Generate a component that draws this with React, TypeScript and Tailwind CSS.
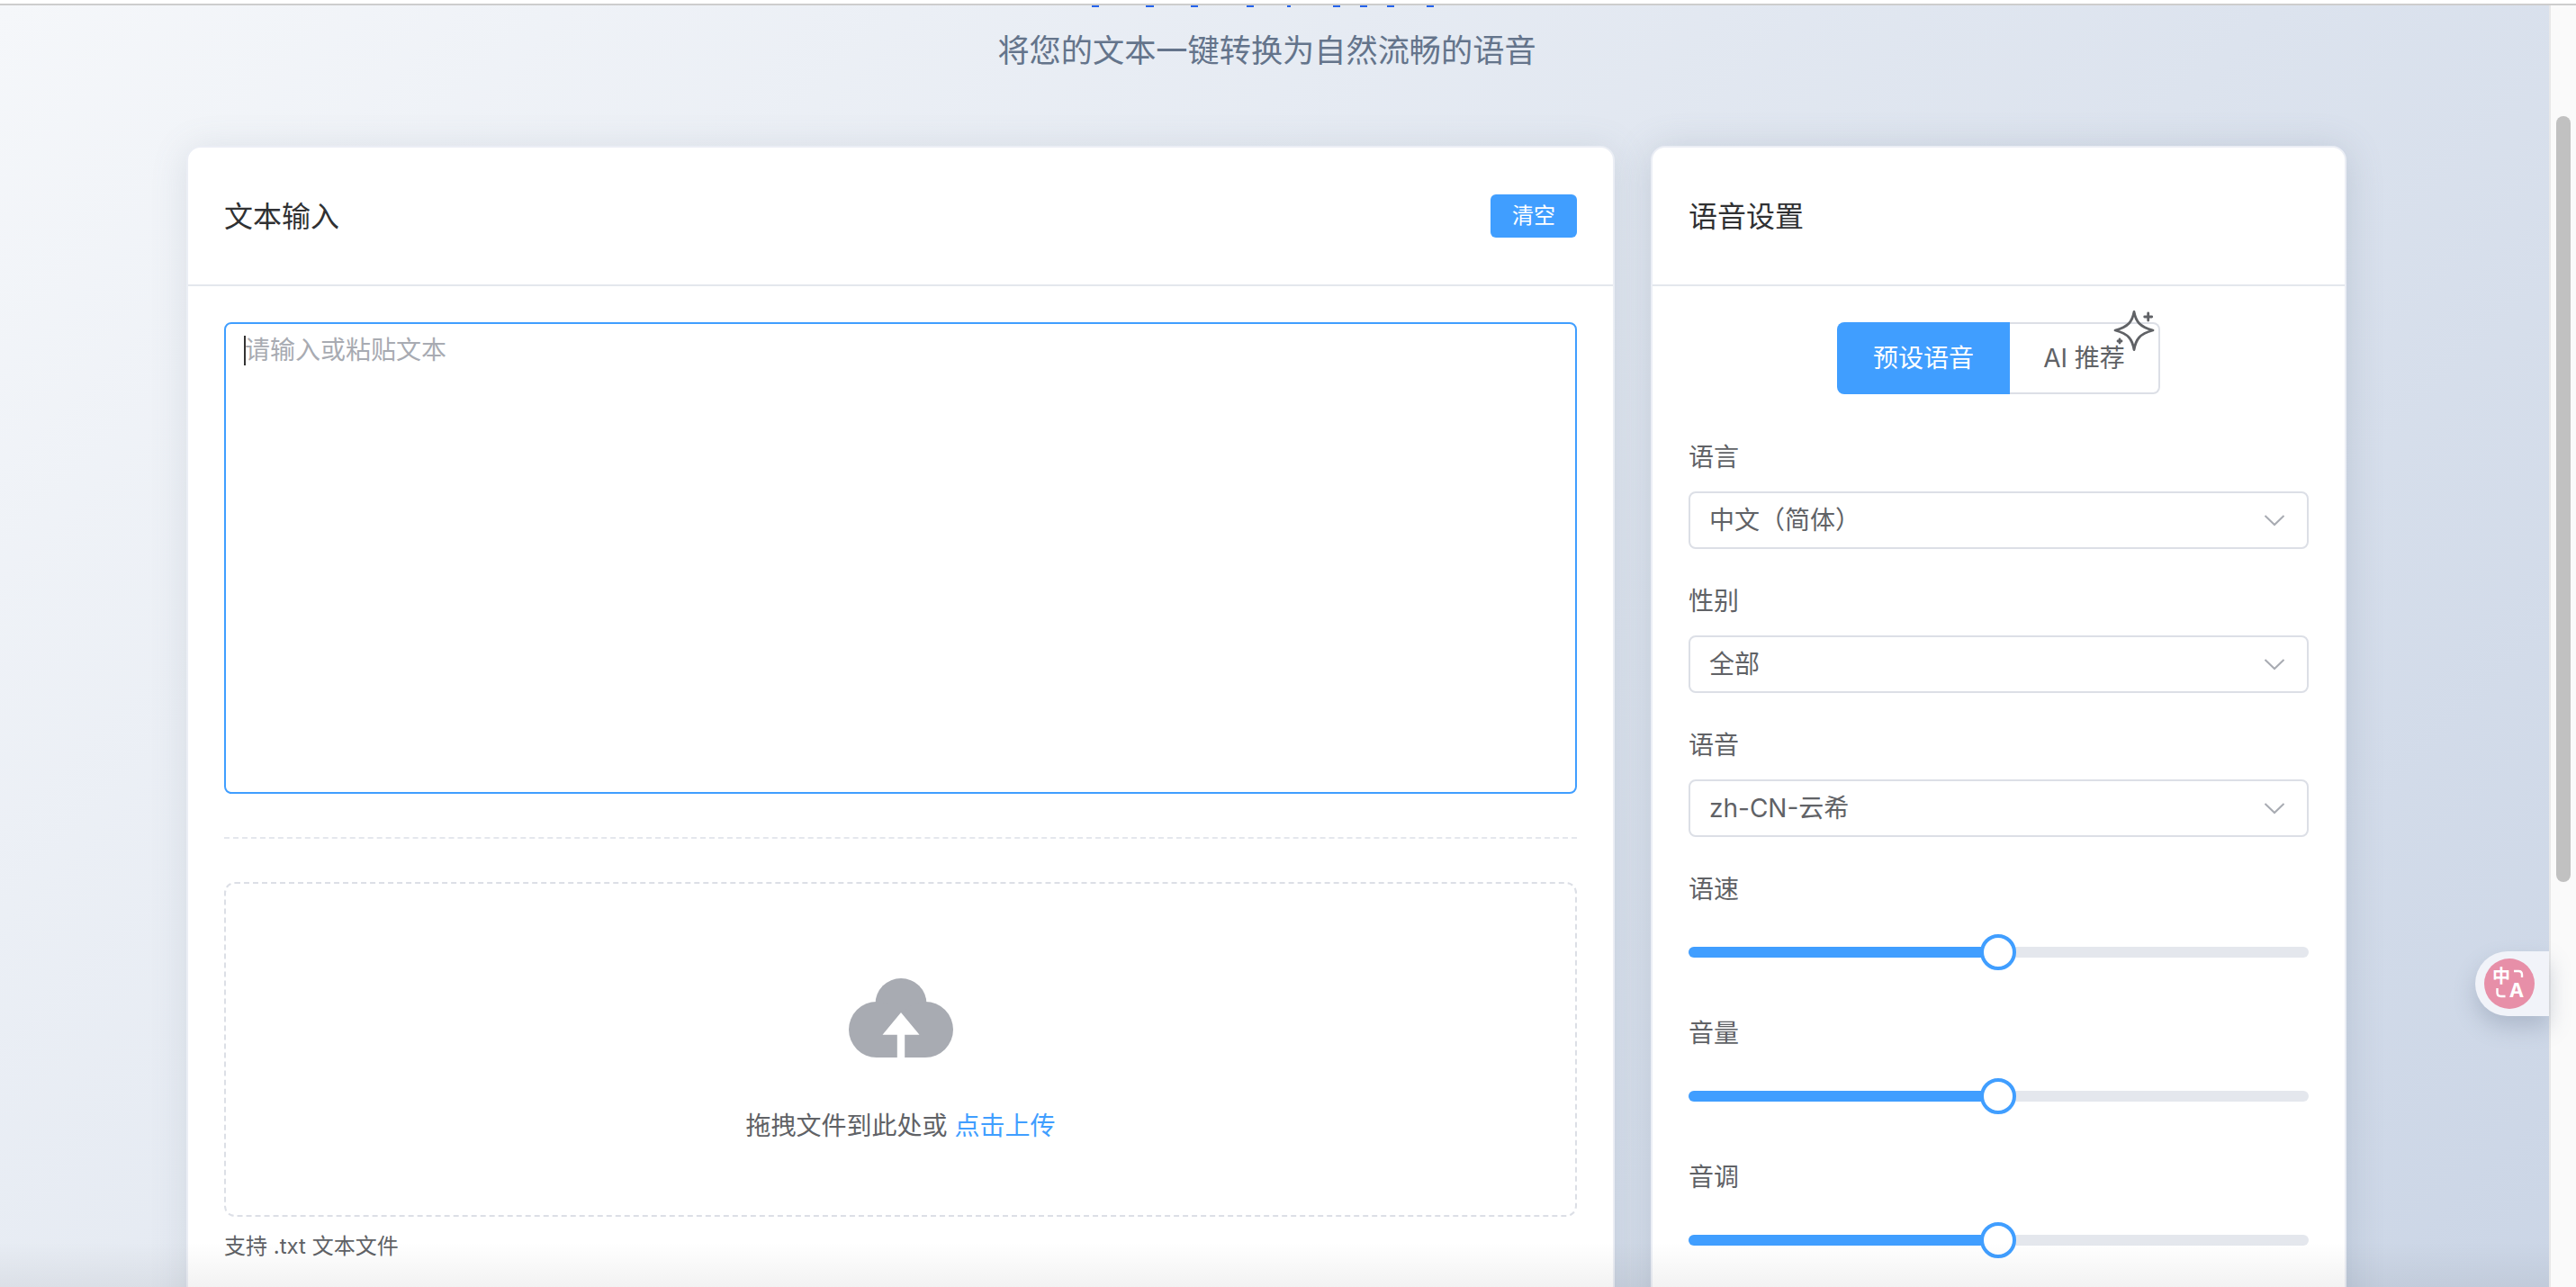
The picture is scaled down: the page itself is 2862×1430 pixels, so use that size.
import type { ReactNode } from 'react'

const TITLE_MARKS = [
  [1213, 8],
  [1273, 9],
  [1323, 8],
  [1385, 8],
  [1430, 4],
  [1481, 8],
  [1511, 8],
  [1541, 8],
  [1585, 8],
]

function Card({ className, children }: { className: string; children: ReactNode }) {
  return (
    <div className={`shrink-0 rounded-2xl border-2 border-[#ebeef5] bg-white ${className}`}>
      {children}
    </div>
  )
}

function CardHeader({ title, children }: { title: string; children?: ReactNode }) {
  return (
    <div className="flex h-[154px] items-center justify-between border-b-2 border-[#e4e7ed] px-10 text-[32px] text-[#303133]">
      <span className="pt-0.5">{title}</span>
      {children}
    </div>
  )
}

function Field({ label, children }: { label: string; children: ReactNode }) {
  return (
    <div className="mb-[37px]">
      <div className="mb-[19px] flex h-10 items-center pt-0.5 text-[28px] text-[#606266]">{label}</div>
      {children}
    </div>
  )
}

function SelectBox({ value }: { value: string }) {
  return (
    <div className="flex h-16 items-center justify-between rounded-lg border-2 border-[#dcdfe6] bg-white pl-[21px] pr-[24px] text-[28px] text-[#606266]">
      <span>{value}</span>
      <svg width="24" height="14" viewBox="0 0 24 14" fill="none" stroke="#a8abb2" strokeWidth="2">
        <path d="M1.5 2 12 12 22.5 2" />
      </svg>
    </div>
  )
}

function SliderBar() {
  return (
    <div className="relative flex h-16 items-center">
      <div className="h-3 w-full overflow-hidden rounded-md bg-[#e4e7ed]">
        <div className="h-full w-1/2 bg-[#409eff]" />
      </div>
      <div className="absolute left-[344px] top-3 h-10 w-10 -translate-x-1/2 rounded-full border-4 border-[#409eff] bg-white" />
    </div>
  )
}

function SparkIcon() {
  return (
    <svg
      className="absolute left-[305px] top-[-14px]"
      width="50"
      height="47"
      viewBox="0 0 50 47"
      fill="none"
      stroke="#606266"
      strokeWidth="2.8"
      strokeLinejoin="round"
      strokeLinecap="round"
    >
      <path d="M25 2.500C27 13 31 19 46 23C31 27 27 33 25 44.500C23 33 19 27 4 23C19 19 23 13 25 2.500Z" />
      <path d="M40.700 4V12M36.700 8H44.700" />
      <path d="M9 33V37M7 35H11" />
    </svg>
  )
}

function TranslateBadge() {
  return (
    <div className="absolute right-0 top-[1051px] flex h-[72px] w-[82px] items-center rounded-l-[36px] bg-[#f1f3f9] pl-[10px] shadow-[0_12px_24px_rgba(90,105,130,0.28)]">
      <svg width="56" height="56" viewBox="0 0 56 56">
        <circle cx="28" cy="28" r="28" fill="#e78fa8" />
        <text x="19" y="27" textAnchor="middle" fontSize="20" fontWeight="700" fill="#fff">中</text>
        <text x="36" y="43" textAnchor="middle" fontSize="22" fontWeight="700" fill="#fff">A</text>
        <path d="M33 14H38Q42 14 42 18V21M14.500 33V38Q14.500 42 18.500 42H23.500" fill="none" stroke="#fff" strokeWidth="2.400" />
      </svg>
    </div>
  )
}

export default function App() {
  return (
    <div className="relative flex h-screen flex-col overflow-hidden bg-white [font-family:Inter,'Noto_Sans_CJK_SC',sans-serif]">
      <div className="h-1 shrink-0 bg-white" />
      <div className="h-0.5 shrink-0 bg-[#cdcdcd]" />

      <div className="flex min-h-0 flex-1">
        <main className="relative h-[2225px] w-[2832px] shrink-0 bg-[linear-gradient(135deg,#f5f7fa_0%,#c3cfe2_100%)]">
          {/* bottoms of the page title, scrolled out of view */}
          <svg className="block" width="2815" height="2" viewBox="0 0 2815 2">
            {TITLE_MARKS.map(([x, w]) => (
              <rect key={x} x={x} y="0" width={w} height="2" fill="#2563eb" />
            ))}
          </svg>

          <p className="mt-6 h-12 w-[2815px] text-center text-[35.2px] leading-[48px] text-[#64748b]">
            将您的文本一键转换为自然流畅的语音
          </p>

          <div className="ml-[207px] mt-[82px] flex gap-10">
            <Card className="h-[1500px] w-[1587px] shadow-[0_4px_40px_rgba(100,116,139,0.16)]">
              <CardHeader title="文本输入">
                <button className="h-12 w-24 rounded-md bg-[#409eff] text-2xl text-white">清空</button>
              </CardHeader>
              <div className="px-10 pt-10">
                <div className="relative">
                  <textarea
                    className="block h-[524px] w-full resize-none rounded-lg border-2 border-[#409eff] px-[21px] py-2 text-[28px] leading-[42px] text-[#606266] outline-none placeholder:text-[#a8abb2]"
                    placeholder="请输入或粘贴文本"
                  />
                  <div className="absolute left-[22px] top-[15px] h-[33px] w-0.5 bg-[#333]" />
                </div>

                <div className="my-12 border-t-2 border-dashed border-[#e4e7ed]" />

                <div className="flex h-[372px] flex-col items-center rounded-xl border-2 border-dashed border-[#dcdfe6] pt-[105px]">
                  <svg width="116" height="88" viewBox="0 0 116 88">
                    <g fill="#a8abb2">
                      <circle cx="58" cy="28.500" r="28.500" />
                      <circle cx="31" cy="57" r="31" />
                      <circle cx="85" cy="57" r="31" />
                      <rect x="31" y="50" width="54" height="38" />
                    </g>
                    <path d="M58 38 78.500 62.700H62.200V88H53.800V62.700H37.500Z" fill="#fff" />
                  </svg>
                  <p className="mt-[55px] text-[28px] leading-[42px] text-[#606266]">
                    拖拽文件到此处或 <span className="text-[#409eff]">点击上传</span>
                  </p>
                </div>
                <p className="mt-[15px] text-2xl leading-9 text-[#606266]">支持 .txt 文本文件</p>
              </div>
            </Card>

            <Card className="h-[1500px] w-[773px] shadow-[0_4px_40px_rgba(100,116,139,0.24)]">
              <CardHeader title="语音设置" />
              <div className="px-10 pt-10">
                <div className="relative mx-auto mb-[49px] flex h-20 w-[359px] text-[28px]">
                  <button className="h-full w-[192px] rounded-l-lg bg-[#409eff] text-white">预设语音</button>
                  <button className="h-full flex-1 rounded-r-lg border-2 border-l-0 border-[#dcdfe6] bg-white text-[#606266]">
                    AI 推荐
                  </button>
                  <SparkIcon />
                </div>

                <Field label="语言"><SelectBox value="中文（简体）" /></Field>
                <Field label="性别"><SelectBox value="全部" /></Field>
                <Field label="语音"><SelectBox value="zh-CN-云希" /></Field>
                <Field label="语速"><SliderBar /></Field>
                <Field label="音量"><SliderBar /></Field>
                <Field label="音调"><SliderBar /></Field>
              </div>
            </Card>
          </div>

          <TranslateBadge />
        </main>

        <aside className="flex-1 border-l-2 border-[#e8e8e8] bg-[#fafafa] pl-1.5">
          <div className="mt-[123px] h-[851px] w-4 rounded-lg bg-[#c1c1c1]" />
        </aside>
      </div>

      {/* window shadow fading over the bottom edge */}
      <div className="pointer-events-none absolute bottom-0 left-0 h-[50px] w-[2832px] bg-gradient-to-b from-transparent to-black/5" />
    </div>
  )
}
